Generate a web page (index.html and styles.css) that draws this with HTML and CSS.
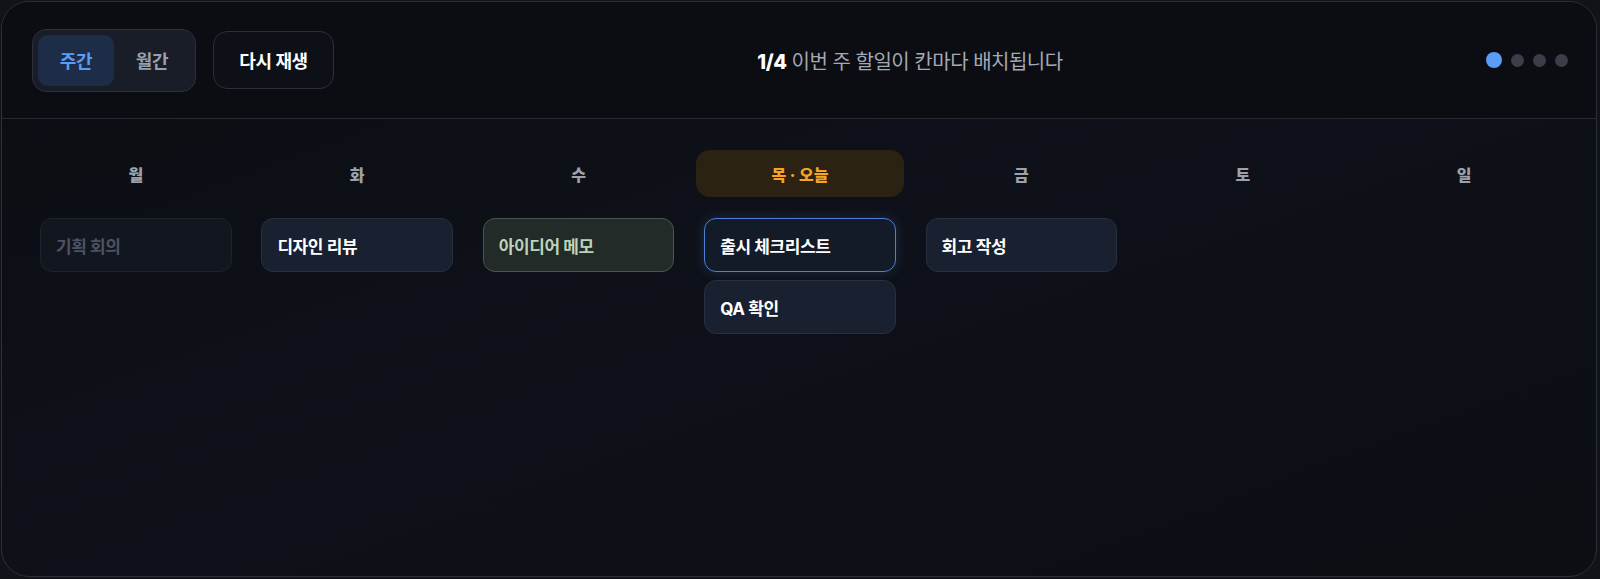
FILE: index.html
```html
<!DOCTYPE html>
<html lang="ko">
<head>
    <meta charset="UTF-8">
    <meta name="viewport" content="width=device-width, initial-scale=1.0">
    <title>주간 보드</title>
    <link rel="stylesheet" href="styles.css">
</head>
<body>
    <div class="board">
        <div class="topbar">
            <div class="segment">
                <button class="tab active">주간</button>
                <button class="tab">월간</button>
            </div>
            <button class="replay">다시 재생</button>
            <div class="caption"><b>1/4</b> 이번 주 할일이 칸마다 배치됩니다</div>
            <div class="dots">
                <span class="dot current"></span>
                <span class="dot"></span>
                <span class="dot"></span>
                <span class="dot"></span>
            </div>
        </div>

        <div class="week">
            <div class="day">
                <div class="day-name">월</div>
                <div class="task done">기획 회의</div>
            </div>
            <div class="day">
                <div class="day-name">화</div>
                <div class="task">디자인 리뷰</div>
            </div>
            <div class="day">
                <div class="day-name">수</div>
                <div class="task memo">아이디어 메모</div>
            </div>
            <div class="day">
                <div class="day-name today">목 · 오늘</div>
                <div class="task focus">출시 체크리스트</div>
                <div class="task">QA 확인</div>
            </div>
            <div class="day">
                <div class="day-name">금</div>
                <div class="task">회고 작성</div>
            </div>
            <div class="day">
                <div class="day-name">토</div>
            </div>
            <div class="day">
                <div class="day-name">일</div>
            </div>
        </div>
    </div>
</body>
</html>
```

FILE: styles.css
```css
* {
    box-sizing: border-box;
}
html, body {
    height: 100%;
}
body {
    margin: 0;
    padding: 1px 3px 2px 1px;
    background-color: #111318;
    font-family: Inter, "Noto Sans CJK KR", sans-serif;
    color: #f2f4f8;
}
.board {
    height: 100%;
    border: 1px solid #2a303b;
    border-radius: 28px;
    background: linear-gradient(160deg, #0b0d12 0%, #0e1119 45%, #0c0e14 100%);
    overflow: hidden;
}
.topbar {
    display: flex;
    align-items: center;
    height: 117px;
    padding: 0 28px 0 30px;
    border-bottom: 1px solid #252a35;
    background-color: #0b0d12;
}
.segment {
    display: flex;
    padding: 5px;
    border: 1px solid #2a303c;
    border-radius: 14px;
    background-color: #181d27;
}
.tab {
    width: 76px;
    height: 51px;
    border: none;
    border-radius: 10px;
    background: none;
    font-family: inherit;
    font-size: 18px;
    font-weight: 700;
    color: #98a0ae;
    letter-spacing: -0.4px;
}
.tab.active {
    background-color: #1e2d47;
    color: #5b9cf5;
}
.replay {
    width: 121px;
    height: 58px;
    margin-left: 17px;
    border: 1px solid #2a303b;
    border-radius: 14px;
    background-color: #0d1016;
    font-family: inherit;
    font-size: 18px;
    font-weight: 700;
    color: #ffffff;
    letter-spacing: -0.4px;
}
.caption {
    flex: 1;
    text-align: center;
    font-size: 20px;
    color: #a3a9b5;
    letter-spacing: -0.5px;
}
.caption b {
    color: #ffffff;
    font-weight: 800;
}
.dots {
    display: flex;
    align-items: center;
    gap: 9px;
}
.dot {
    width: 13px;
    height: 13px;
    border-radius: 50%;
    background-color: #393e49;
}
.dot.current {
    width: 16px;
    height: 16px;
    background-color: #5b9cf5;
}
.week {
    display: grid;
    grid-template-columns: repeat(7, 1fr);
    column-gap: 13.7px;
    padding: 31px 28px 0 30px;
}
.day {
    display: flex;
    flex-direction: column;
    gap: 8px;
}
.day-name {
    height: 47px;
    margin-bottom: 13px;
    border-radius: 14px;
    display: flex;
    align-items: center;
    justify-content: center;
    font-size: 16px;
    font-weight: 800;
    color: #9ba1ad;
}
.day-name.today {
    background-color: #2c2213;
    color: #f5a524;
}
.task {
    height: 54px;
    margin: 0 8px;
    padding: 0 15px;
    display: flex;
    align-items: center;
    border: 1px solid #283040;
    border-radius: 12px;
    background-color: #192131;
    font-size: 17px;
    font-weight: 700;
    color: #ffffff;
    letter-spacing: -0.4px;
}
.task.done {
    background-color: #11161f;
    border-color: #1d2330;
    color: #4d5360;
}
.task.memo {
    background-color: #232b28;
    border-color: #4b5650;
    color: #bcd3bb;
}
.task.focus {
    background-color: #131a28;
    border-color: #4d7fd4;
    box-shadow: 0 0 12px rgba(77, 127, 212, 0.25);
}
```
